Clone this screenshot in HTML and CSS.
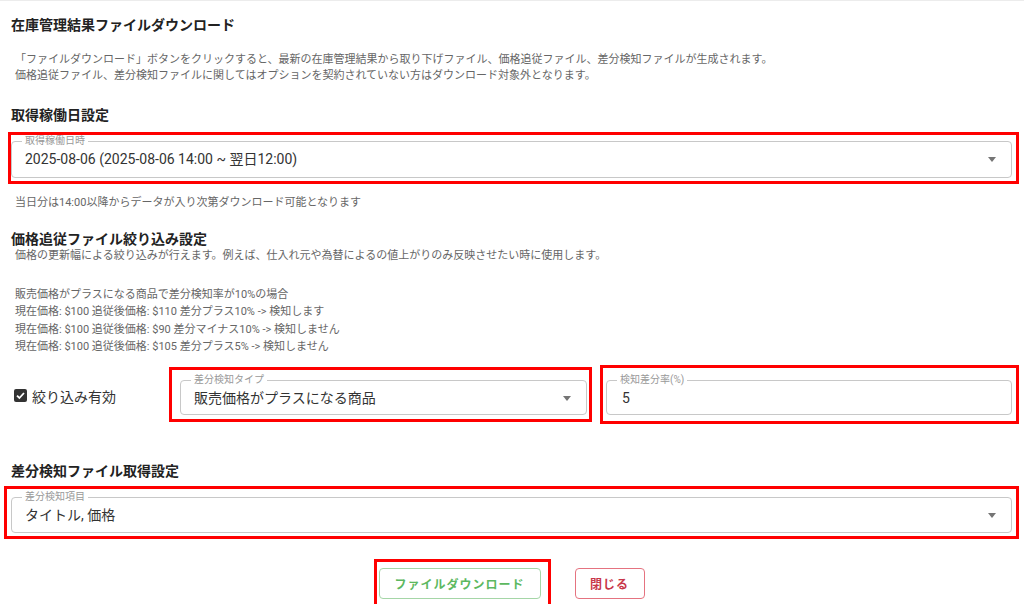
FILE: index.html
```html
<!DOCTYPE html>
<html lang="ja">
<head>
<meta charset="utf-8">
<title>在庫管理結果ファイルダウンロード</title>
<link rel="stylesheet" href="styles.css">
</head>
<body>
<div class="page">
  <h1 class="title">在庫管理結果ファイルダウンロード</h1>
  <p class="desc desc-top">「ファイルダウンロード」ボタンをクリックすると、最新の在庫管理結果から取り下げファイル、価格追従ファイル、差分検知ファイルが生成されます。<br>価格追従ファイル、差分検知ファイルに関してはオプションを契約されていない方はダウンロード対象外となります。</p>

  <h2 class="heading h-date">取得稼働日設定</h2>
  <div class="mark mark-date">
    <fieldset class="field">
      <legend>取得稼働日時</legend>
      <div class="value select">
        <span>2025-08-06 (2025-08-06 14:00 ~ 翌日12:00)</span>
        <span class="arrow"></span>
      </div>
    </fieldset>
  </div>
  <p class="desc helper">当日分は14:00以降からデータが入り次第ダウンロード可能となります</p>

  <h2 class="heading h-price">価格追従ファイル絞り込み設定</h2>
  <p class="desc">価格の更新幅による絞り込みが行えます。例えば、仕入れ元や為替によるの値上がりのみ反映させたい時に使用します。</p>
  <p class="desc examples">販売価格がプラスになる商品で差分検知率が10%の場合<br>現在価格: $100 追従後価格: $110 差分プラス10% -&gt; 検知します<br>現在価格: $100 追従後価格: $90 差分マイナス10% -&gt; 検知しません<br>現在価格: $100 追従後価格: $105 差分プラス5% -&gt; 検知しません</p>

  <div class="filter-row">
    <label class="check">
      <span class="box"><svg width="11" height="11" viewBox="0 0 11 11"><path d="M2 5.6 L4.4 8 L9 3" fill="none" stroke="#fff" stroke-width="1.8"/></svg></span>
      <span>絞り込み有効</span>
    </label>
    <div class="mark mark-type">
      <fieldset class="field">
        <legend>差分検知タイプ</legend>
        <div class="value select">
          <span>販売価格がプラスになる商品</span>
          <span class="arrow"></span>
        </div>
      </fieldset>
    </div>
    <div class="mark mark-rate">
      <fieldset class="field">
        <legend>検知差分率(%)</legend>
        <div class="value">5</div>
      </fieldset>
    </div>
  </div>

  <h2 class="heading h-diff">差分検知ファイル取得設定</h2>
  <div class="mark mark-diff">
    <fieldset class="field">
      <legend>差分検知項目</legend>
      <div class="value select">
        <span>タイトル, 価格</span>
        <span class="arrow"></span>
      </div>
    </fieldset>
  </div>

  <div class="actions">
    <div class="mark mark-btn">
      <button class="btn btn-download">ファイルダウンロード</button>
    </div>
    <button class="btn btn-close">閉じる</button>
  </div>
</div>
</body>
</html>
```

FILE: styles.css
```css
* { box-sizing: border-box; }
html, body { margin: 0; padding: 0; background: #fff; }
body {
  font-family: Roboto, "Noto Sans CJK JP", sans-serif;
  color: #333;
  border-top: 1px solid #ececec;
}
.page {
  padding: 0 5px 0 11px;
}
.title {
  margin: 13px 0 0;
  font-size: 14px;
  line-height: 22px;
  font-weight: 700;
  color: #222;
}
.desc {
  margin: 0;
  padding-left: 4px;
  font-size: 11px;
  line-height: 16px;
  color: #666;
}
.desc-top { margin-top: 16px; }
.heading {
  margin: 0;
  font-size: 14px;
  font-weight: 700;
  color: #222;
}
.h-date { margin-top: 20px; line-height: 22px; }
.h-price { margin-top: 19px; line-height: 18px; }
.h-diff { margin-top: 38px; line-height: 18px; }
.helper { margin-top: 11px; }
.examples { margin-top: 22px; line-height: 17.3px; }

.mark { border: 3px solid #ff0000; }
.mark-date { margin: 6px 0 0 -3px; padding: 0 4px 3px 0; }
.mark-diff { margin: 6px 0 0 -7px; padding: 2px 4px 3px 4px; }

.field {
  margin: 0;
  border: 1px solid #c8c8c8;
  border-radius: 4px;
  padding: 0 13px 6px;
  min-width: 0;
}
.field legend {
  margin-left: -3px;
  padding: 0 3px;
  font-size: 10px;
  line-height: 12px;
  color: #999;
}
.value {
  font-size: 14px;
  line-height: 20px;
  color: #333;
  padding-top: 2px;
}
.mark-date .field { padding-bottom: 8px; }
.mark-diff .field { padding-bottom: 7px; }
.select {
  display: flex;
  align-items: center;
  justify-content: space-between;
}
.arrow {
  width: 0;
  height: 0;
  border-left: 4.5px solid transparent;
  border-right: 4.5px solid transparent;
  border-top: 5px solid #757575;
  margin-right: 2px;
}

.filter-row {
  display: flex;
  align-items: center;
  margin-top: 10px;
}
.check {
  width: 158px;
  display: flex;
  align-items: center;
  gap: 5px;
  padding-left: 3px;
  padding-top: 2px;
  font-size: 14px;
  color: #333;
}
.box {
  width: 13px;
  height: 13px;
  background: #333;
  border-radius: 2px;
  display: flex;
  align-items: center;
  justify-content: center;
}
.mark-type { width: 423px; padding: 4px 2px 4px 8px; }
.mark-type .field { padding-bottom: 6px; }
.mark-rate { flex: 1; margin-left: 8px; padding: 6px 4px 6px 3px; }
.mark-rate .value { padding-left: 2px; }

.actions {
  display: flex;
  justify-content: center;
  align-items: center;
  gap: 24px;
  margin-top: 20px;
  padding-right: 12px;
}
.mark-btn { padding: 6px 7px 6px 2px; }
.btn {
  font-family: Roboto, "Noto Sans CJK JP", sans-serif;
  font-size: 12px;
  font-weight: 700;
  letter-spacing: 1px;
  height: 31px;
  border-radius: 4px;
  background: #fff;
  padding: 0;
  cursor: pointer;
}
.btn-download {
  width: 162px;
  border: 1px solid #a5d6a7;
  color: #5cb860;
}
.btn-close {
  width: 70px;
  border: 1px solid #e57380;
  color: #c8374a;
}
```
